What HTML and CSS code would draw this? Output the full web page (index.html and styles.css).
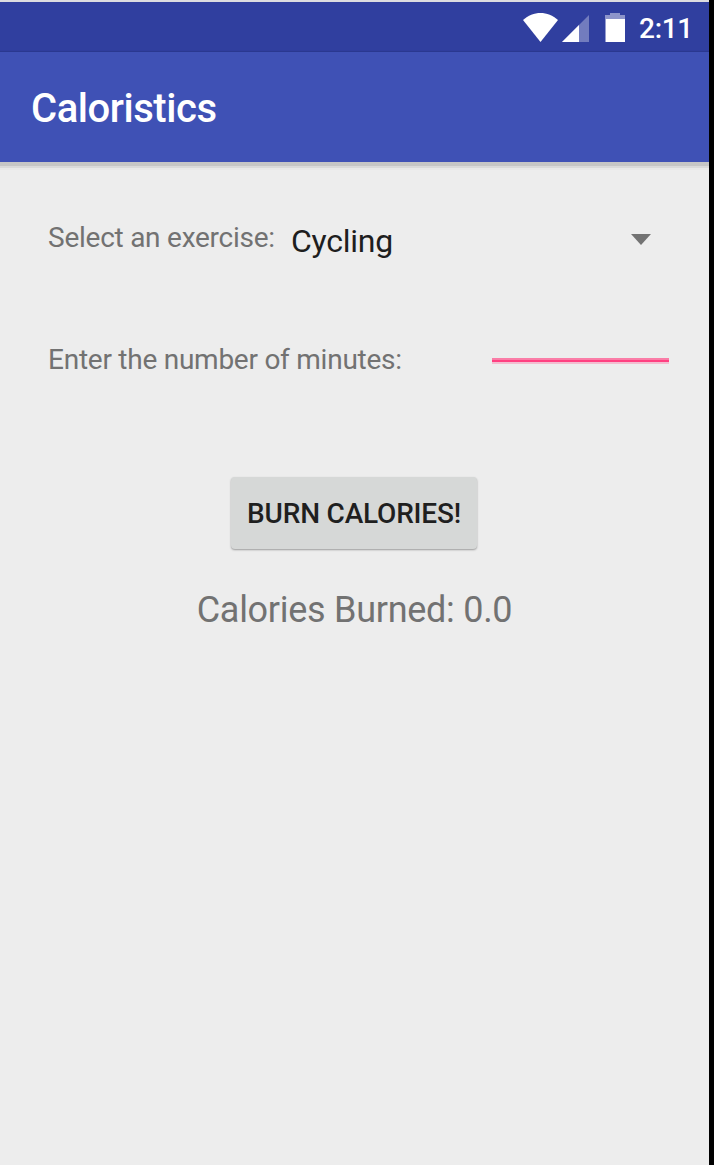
FILE: index.html
```html
<!DOCTYPE html>
<html lang="en">
<head>
<meta charset="utf-8">
<title>Caloristics</title>
<link rel="stylesheet" href="styles.css">
</head>
<body>
<div class="screen">
  <div class="status-bar">
    <svg class="status-icons" width="104" height="32" viewBox="0 0 104 32">
      <path fill="#fff" d="M0 8C10-1.500 25-1.500 35 8L17.500 30Z"/>
      <path fill="#fff" fill-opacity=".32" d="M66 3V30H39Z"/>
      <path fill="#fff" d="M56 13V30H39Z"/>
      <path fill="#fff" fill-opacity=".45" d="M87 1H97V3H102V7H82V3H87Z"/>
      <path fill="#fff" d="M82.500 7H102V30H82.500Z"/>
    </svg>
    <span class="clock">2:11</span>
  </div>
  <header class="app-bar"><h1 class="title">Caloristics</h1></header>
  <main class="content">
    <div class="exercise-row">
      <span class="label exercise-label">Select an exercise:</span>
      <div class="spinner">
        <span class="spinner-value">Cycling</span>
        <svg class="arrow" width="20" height="11" viewBox="0 0 20 11"><path fill="#737373" d="M0 0H20L10 11Z"/></svg>
      </div>
    </div>
    <div class="minutes-row">
      <label class="label minutes-label" for="minutes">Enter the number of minutes:</label>
      <input class="minutes-input" id="minutes" type="text">
    </div>
    <button class="burn-button" type="button">BURN CALORIES!</button>
    <p class="result">Calories Burned: 0.0</p>
  </main>
</div>
</body>
</html>
```

FILE: styles.css
```css
* { box-sizing: border-box; }
body { margin: 0; background: #000; font-family: Roboto, "Liberation Sans", sans-serif; }
.screen {
  width: 709px;
  height: 1165px;
  overflow: hidden;
  display: flex;
  flex-direction: column;
  background: #ededed;
  border-top: 2px solid #dcdce0;
}
.status-bar {
  height: 50px;
  flex: none;
  display: flex;
  align-items: flex-start;
  justify-content: flex-end;
  padding: 10px 16px 0 0;
  background: #303f9f;
  box-shadow: inset 0 -2px 1px -1px #2b388e;
}
.status-icons { display: block; margin-right: 12px; }
.clock { font-size: 28px; line-height: 34px; font-weight: 500; letter-spacing: -.3px; color: #fff; }
.app-bar {
  height: 110px;
  flex: none;
  display: flex;
  align-items: center;
  padding: 2px 0 0 31px;
  background: #3f51b5;
  box-shadow: 0 4px 0 #c6c6c6, 0 6px 0 #dadada, 0 8px 0 #e9e9e9;
}
.title { margin: 0; font-size: 40px; font-weight: 500; letter-spacing: -.45px; color: #fff; }
.content { display: flex; flex-direction: column; align-items: center; }
.label { font-size: 28px; line-height: 34px; letter-spacing: -.25px; color: #727272; white-space: nowrap; }
.exercise-row { width: 100%; height: 80px; margin-top: 38px; padding: 0 58px 0 48px; display: flex; }
.exercise-label { width: 243px; padding-top: 21px; }
.spinner { flex: 1; display: flex; align-items: center; justify-content: space-between; }
.spinner-value { padding-top: 2px; font-size: 32px; line-height: 38px; letter-spacing: -.25px; color: #1e1e1e; }
.arrow { display: block; margin-top: -2px; }
.minutes-row { width: 100%; height: 84px; margin-top: 38px; padding: 0 40px 0 48px; display: flex; justify-content: space-between; }
.minutes-label { padding-top: 25px; }
.minutes-input {
  width: 177px;
  height: 46px;
  padding: 0;
  border: 0;
  background: linear-gradient(#fa7da7 0 2px, #ff4081 2px 4px, #f3bdd0 4px 6px) 0 100% / 100% 6px no-repeat;
  outline: 0;
}
.burn-button {
  width: 246px;
  height: 72px;
  margin: 75px 1px 0 0;
  padding: 2px 0 0;
  border: 0;
  border-radius: 4px;
  background: #d6d8d7;
  box-shadow: 0 1px 2px rgba(0, 0, 0, .35);
  font: 500 28px/34px Roboto, "Liberation Sans", sans-serif;
  letter-spacing: -.2px;
  color: #1f1f1f;
  white-space: nowrap;
}
.result { margin: 39px 0 0; font-size: 36px; line-height: 44px; letter-spacing: -.28px; color: #727272; }
```
